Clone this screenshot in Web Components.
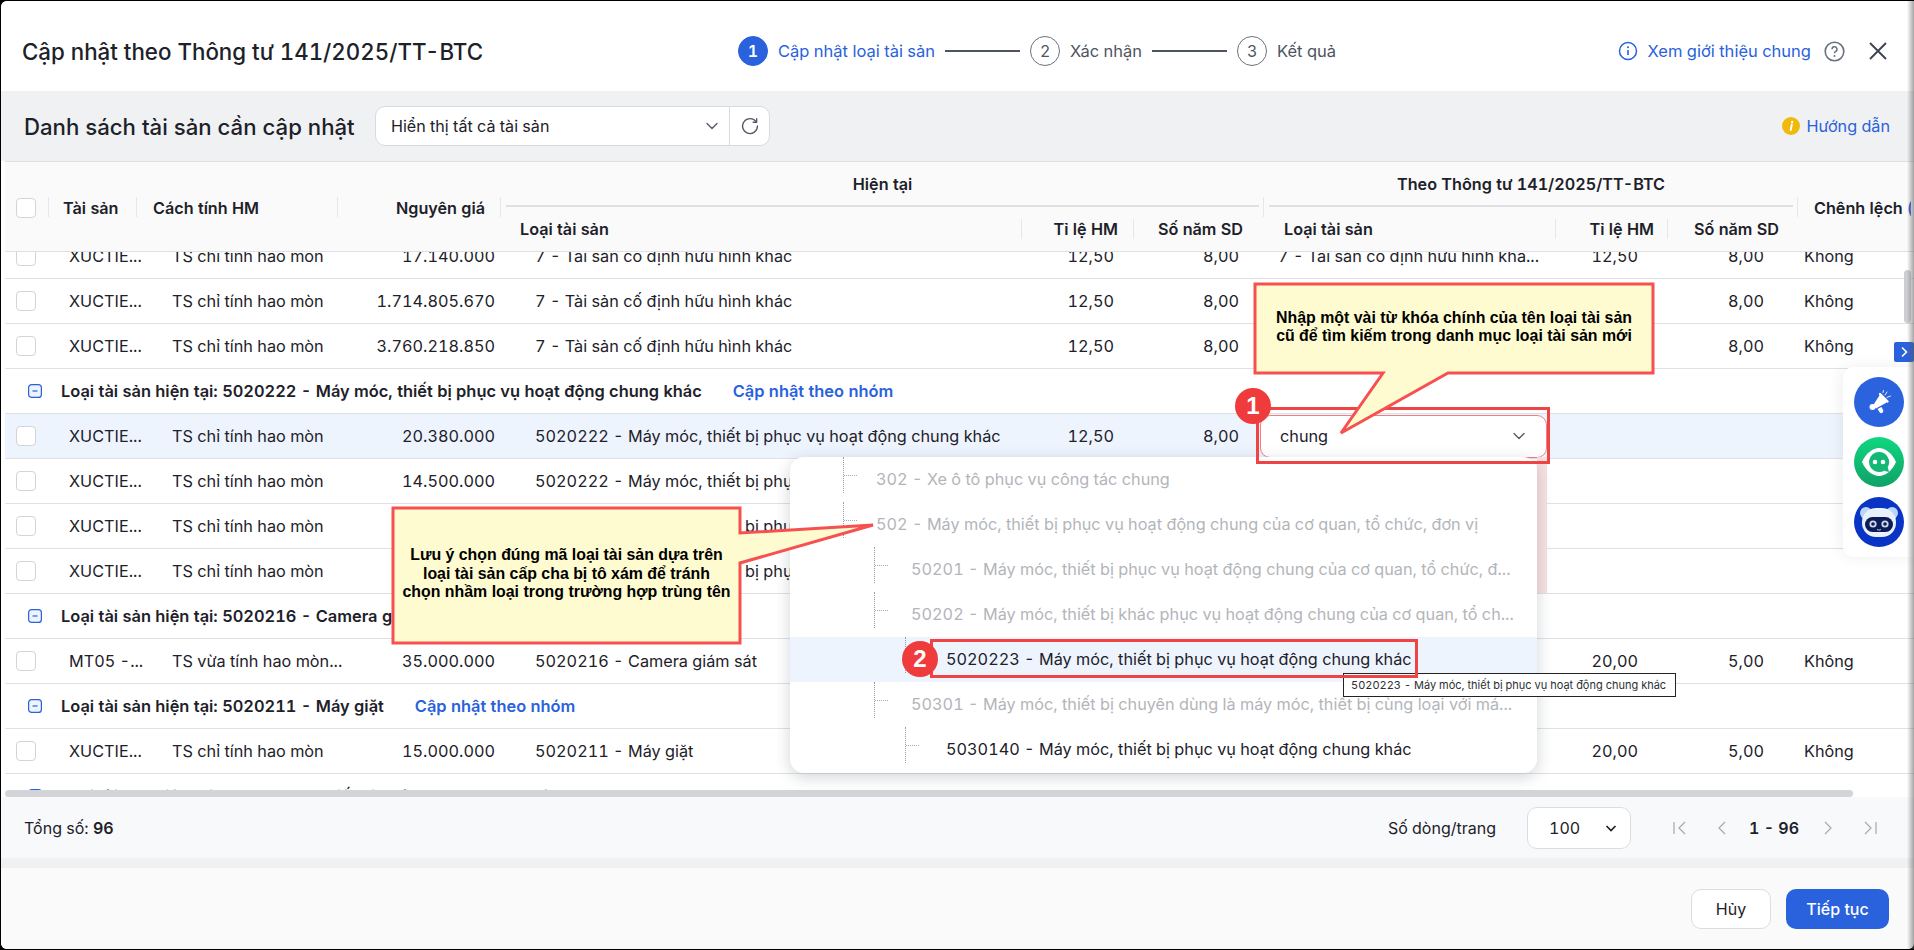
<!DOCTYPE html>
<html lang="vi">
<head>
<meta charset="utf-8">
<title>Cập nhật theo Thông tư 141/2025/TT-BTC</title>
<style>
    html, body { margin: 0; padding: 0; background: #000; overflow: hidden; }
    body { font-family: Inter, "Noto Sans", sans-serif; color: #1d2129; font-variant-numeric: tabular-nums; }
</style>
</head>
<body>
<update-dialog>
    <dialog-header slot="header"></dialog-header>
    <list-toolbar slot="toolbar"></list-toolbar>
    <asset-table slot="table">
        <asset-row cells="XUCTIE...|TS chỉ tính hao mòn|17.140.000|7 - Tài sản cố định hữu hình khác|12,50|8,00|7 - Tài sản cố định hữu hình khá...|12,50|8,00|Không"></asset-row>
        <asset-row cells="XUCTIE...|TS chỉ tính hao mòn|1.714.805.670|7 - Tài sản cố định hữu hình khác|12,50|8,00|7 - Tài sản cố định hữu hình khác|12,50|8,00|Không"></asset-row>
        <asset-row cells="XUCTIE...|TS chỉ tính hao mòn|3.760.218.850|7 - Tài sản cố định hữu hình khác|12,50|8,00|7 - Tài sản cố định hữu hình khác|12,50|8,00|Không"></asset-row>
        <group-row link="Cập nhật theo nhóm">Loại tài sản hiện tại: 5020222 - Máy móc, thiết bị phục vụ hoạt động chung khác</group-row>
        <asset-row active combo="chung" cells="XUCTIE...|TS chỉ tính hao mòn|20.380.000|5020222 - Máy móc, thiết bị phục vụ hoạt động chung khác|12,50|8,00"></asset-row>
        <asset-row cells="XUCTIE...|TS chỉ tính hao mòn|14.500.000|5020222 - Máy móc, thiết bị phục vụ hoạt động chung khác|12,50|8,00"></asset-row>
        <asset-row cells="XUCTIE...|TS chỉ tính hao mòn|25.000.000|5020222 - Máy móc, thiết bị phục vụ hoạt động chung khác|12,50|8,00"></asset-row>
        <asset-row cells="XUCTIE...|TS chỉ tính hao mòn|18.900.000|5020222 - Máy móc, thiết bị phục vụ hoạt động chung khác|12,50|8,00"></asset-row>
        <group-row link="Cập nhật theo nhóm">Loại tài sản hiện tại: 5020216 - Camera giám sát</group-row>
        <asset-row cells="MT05 -...|TS vừa tính hao mòn...|35.000.000|5020216 - Camera giám sát|20,00|5,00|5020216 - Camera giám sát|20,00|5,00|Không"></asset-row>
        <group-row link="Cập nhật theo nhóm">Loại tài sản hiện tại: 5020211 - Máy giặt</group-row>
        <asset-row cells="XUCTIE...|TS chỉ tính hao mòn|15.000.000|5020211 - Máy giặt|20,00|5,00|5020211 - Máy giặt|20,00|5,00|Không"></asset-row>
        <group-row>Loại tài sản hiện tại: 5020213 - Thiết bị khác phục vụ hoạt động chung</group-row>
    </asset-table>
    <table-footer slot="footer"></table-footer>
    <dialog-actions slot="actions"></dialog-actions>

    <tree-dropdown slot="overlay">
        <tree-option level="0" muted>302 - Xe ô tô phục vụ công tác chung</tree-option>
        <tree-option level="0" muted>502 - Máy móc, thiết bị phục vụ hoạt động chung của cơ quan, tổ chức, đơn vị</tree-option>
        <tree-option level="1" muted>50201 - Máy móc, thiết bị phục vụ hoạt động chung của cơ quan, tổ chức, đ...</tree-option>
        <tree-option level="1" muted>50202 - Máy móc, thiết bị khác phục vụ hoạt động chung của cơ quan, tổ ch...</tree-option>
        <tree-option level="2" selected>5020223 - Máy móc, thiết bị phục vụ hoạt động chung khác</tree-option>
        <tree-option level="1" muted>50301 - Máy móc, thiết bị chuyên dùng là máy móc, thiết bị cùng loại với má...</tree-option>
        <tree-option level="2">5030140 - Máy móc, thiết bị phục vụ hoạt động chung khác</tree-option>
    </tree-dropdown>
    <hover-tip slot="overlay">5020223 - Máy móc, thiết bị phục vụ hoạt động chung khác</hover-tip>
    <mark-box slot="overlay" style="left:1255px;top:406px;width:294px;height:57px"></mark-box>
    <mark-box slot="overlay" style="left:929px;top:638px;width:488px;height:39px"></mark-box>
    <step-marker slot="overlay" style="left:1234px;top:387px">1</step-marker>
    <step-marker slot="overlay" style="left:901px;top:640px">2</step-marker>
    <note-callout slot="overlay" style="left:1254px;top:283px;width:398px;height:89px" points="0,0 398,0 398,89 193,89 86,149 128,89 0,89">
        Nhập một vài từ khóa chính của tên loại tài sản<br>cũ để tìm kiếm trong danh mục loại tài sản mới
    </note-callout>
    <note-callout slot="overlay" style="left:392px;top:507px;width:347px;height:135px" points="0,0 347,0 347,25 480,17 347,55 347,135 0,135">
        Lưu ý chọn đúng mã loại tài sản dựa trên<br>loại tài sản cấp cha bị tô xám để tránh<br>chọn nhầm loại trong trường hợp trùng tên
    </note-callout>
    <side-panel slot="overlay"></side-panel>
</update-dialog>

<script>
const ICONS = {
    chevron: `<path d="M4 6.5l5 5 5-5" fill="none" stroke="currentColor" stroke-width="1.4" stroke-linecap="round" stroke-linejoin="round"/>`,
    refresh: `<path d="M14.6 5.4A6.7 6.7 0 1 0 15.7 9" fill="none" stroke="currentColor" stroke-width="1.2" stroke-linecap="round"/><path d="M15 2.4v3.2h-3.2" fill="none" stroke="currentColor" stroke-width="1.2" stroke-linecap="round" stroke-linejoin="round"/>`,
    first: `<path d="M3 3v12M14 3L8 9l6 6" fill="none" stroke="currentColor" stroke-width="1.2"/>`,
    prev: `<path d="M12 3L6 9l6 6" fill="none" stroke="currentColor" stroke-width="1.2"/>`,
    next: `<path d="M6 3l6 6-6 6" fill="none" stroke="currentColor" stroke-width="1.2"/>`,
    last: `<path d="M15 3v12M4 3l6 6-6 6" fill="none" stroke="currentColor" stroke-width="1.2"/>`
};
const icon = (name, size = 18) => `<svg width="${size}" height="${size}" viewBox="0 0 18 18" style="display:block">${ICONS[name]}</svg>`;

class BaseElement extends HTMLElement {
    constructor() {
        super();
        this.attachShadow({ mode: "open" });
    }

    connectedCallback() {
        this.render();
    }

    getTemplate() {
        const template = document.createElement("template");
        template.innerHTML = `<style>${this.getStyles()}</style>${this.getMarkup()}`;
        return template;
    }

    render() {
        this.shadowRoot.appendChild(this.getTemplate().content.cloneNode(true));
    }
}

class UpdateDialog extends BaseElement {
    getStyles() {
        return `
            :host { display: block; position: relative; width: 1913px; height: 948px; margin: 1px 0 1px 1px; }
            .frame { height: 100%; display: flex; flex-direction: column; background: #fafafa; border-radius: 6px 0 6px 6px; overflow: hidden; }
            .edge { position: absolute; top: 0; right: 0; bottom: 0; width: 7px; pointer-events: none; z-index: 5;
                background: linear-gradient(to right, rgba(90,90,90,0), rgba(90,90,90,.55)); }
        `;
    }
    getMarkup() {
        return `
            <div class="frame">
                <slot name="header"></slot>
                <slot name="toolbar"></slot>
                <slot name="table"></slot>
                <slot name="footer"></slot>
                <slot name="actions"></slot>
            </div>
            <slot name="overlay"></slot>
            <div class="edge"></div>
        `;
    }
}

class DialogHeader extends BaseElement {
    getStyles() {
        return `
            :host { display: flex; align-items: center; height: 90px; box-sizing: border-box; padding-top: 10px; background: #fff; flex: none; }
            h1 { margin: 0 0 0 21px; width: 716px; flex: none; font-size: 22.3px; font-weight: 500; white-space: nowrap; color: #1d2129; }
            .steps { display: flex; align-items: center; font-size: 16.5px; color: #4e5561; }
            .num { width: 28px; height: 28px; border: 1px solid #6b717c; border-radius: 50%; display: flex; align-items: center; justify-content: center; margin-right: 10px; font-size: 16px; }
            .current .num { background: #2962dc; border-color: #2962dc; color: #fff; font-weight: 600; }
            .current { color: #2962dc; }
            .step { display: flex; align-items: center; }
            .bar { width: 75px; height: 2px; background: #4e5561; margin: 0 10px; }
            .right { margin-left: auto; display: flex; align-items: center; padding-right: 26px; }
            .intro { color: #2962dc; font-size: 16.5px; margin: 0 13px 0 10px; }
            .x { margin-left: 23px; display: block; }
        `;
    }
    getMarkup() {
        return `
            <h1>Cập nhật theo Thông tư 141/2025/TT-BTC</h1>
            <div class="steps">
                <div class="step current"><span class="num">1</span>Cập nhật loại tài sản</div>
                <span class="bar"></span>
                <div class="step"><span class="num">2</span>Xác nhận</div>
                <span class="bar"></span>
                <div class="step"><span class="num">3</span>Kết quả</div>
            </div>
            <div class="right">
                <svg width="20" height="20" viewBox="0 0 20 20"><circle cx="10" cy="10" r="8.5" fill="none" stroke="#2962dc" stroke-width="1.5"/><path d="M10 9v5" stroke="#2962dc" stroke-width="1.6"/><circle cx="10" cy="6.2" r="1" fill="#2962dc"/></svg>
                <span class="intro">Xem giới thiệu chung</span>
                <svg width="21" height="21" viewBox="0 0 21 21"><circle cx="10.5" cy="10.5" r="9.3" fill="none" stroke="#6b717c" stroke-width="1.6"/><path d="M8 8.2a2.5 2.5 0 1 1 3.7 2.2c-.8.4-1.2.9-1.2 1.8" fill="none" stroke="#6b717c" stroke-width="1.5"/><circle cx="10.5" cy="15" r="1" fill="#6b717c"/></svg>
                <svg class="x" width="20" height="20" viewBox="0 0 20 20"><path d="M2 2l16 16M18 2L2 18" stroke="#3d4450" stroke-width="1.9"/></svg>
            </div>
        `;
    }
}

class ListToolbar extends BaseElement {
    getStyles() {
        return `
            :host { display: flex; align-items: center; height: 70px; background: #f0f1f3; padding-left: 23px; flex: none; }
            h2 { margin: 0; font-size: 22.2px; font-weight: 500; width: 351px; flex: none; white-space: nowrap; }
            .picker { display: flex; width: 393px; height: 38px; border: 1px solid #d9dade; border-radius: 10px; background: #fff; align-items: center; font-size: 16.1px; }
            .value { flex: 1; padding-left: 15px; white-space: nowrap; }
            .arrow { color: #555b66; margin-right: 8px; }
            .reload { width: 39px; height: 100%; border-left: 1px solid #d9dade; display: flex; align-items: center; justify-content: center; color: #555b66; }
            .guide { margin-left: auto; margin-right: 24px; display: flex; align-items: center; color: #2962dc; font-size: 16.2px; gap: 6px; }
        `;
    }
    getMarkup() {
        return `
            <h2>Danh sách tài sản cần cập nhật</h2>
            <div class="picker">
                <span class="value">Hiển thị tất cả tài sản</span>
                <span class="arrow">${icon("chevron")}</span>
                <span class="reload">${icon("refresh", 20)}</span>
            </div>
            <div class="guide">
                <svg width="18" height="18" viewBox="0 0 18 18"><circle cx="9" cy="9" r="9" fill="#f0b90b"/><path d="M9.8 7.6L8.7 13" stroke="#fff" stroke-width="2" stroke-linecap="round"/><circle cx="10.2" cy="4.9" r="1.2" fill="#fff"/></svg>
                Hướng dẫn
            </div>
        `;
    }
}

const COLUMNS = "44px 88px 201px 163px 521px 112px 130px 292px 112px 130px 113px";

class AssetTable extends BaseElement {
    getStyles() {
        return `
            :host { display: block; position: relative; flex: none; height: 636px; background: #fff; padding-left: 4px; }
            .head { display: grid; grid-template-columns: ${COLUMNS}; grid-template-rows: 45px 44px; height: 91px; box-sizing: border-box;
                border-top: 1px solid #dfe0e3; border-bottom: 1px solid #dfe0e3; background: #fafafa; font-size: 16.2px; font-weight: 600; }
            .head > div { display: flex; align-items: center; white-space: nowrap; box-sizing: border-box; }
            .span { grid-row: 1 / span 2; padding-top: 2px; }
            .sep { background: linear-gradient(#e6e7ea, #e6e7ea) right center / 1px 20px no-repeat; }
            .group { justify-content: center; margin: 0 5px; border-bottom: 2px solid #dfe0e3; }
            .end { justify-content: flex-end; }
            .body { height: 538px; overflow: hidden; }
            .rows { margin-top: -18px; }
            .hbar { height: 7px; width: 1848px; border-radius: 4px; background: #d3d4d8; }
            .vbar { position: absolute; right: 3px; top: 109px; width: 7px; height: 53px; border-radius: 4px; background: #ccced2; }
        `;
    }
    getMarkup() {
        return `
            <div class="head">
                <div class="span sep" style="grid-column:1;padding-left:11px"><span style="width:18px;height:18px;border:1px solid #d3d4d8;border-radius:4px;background:#fff"></span></div>
                <div class="span sep" style="grid-column:2;padding-left:14px">Tài sản</div>
                <div class="span sep" style="grid-column:3;padding-left:16px">Cách tính HM</div>
                <div class="span sep end" style="grid-column:4;padding-right:16px">Nguyên giá</div>
                <div class="group" style="grid-column:5 / span 3;grid-row:1">Hiện tại</div>
                <div class="group" style="grid-column:8 / span 3;grid-row:1">Theo Thông tư 141/2025/TT-BTC</div>
                <div class="sep" style="grid-column:7;grid-row:1 / span 2"></div>
                <div class="sep" style="grid-column:10;grid-row:1 / span 2"></div>
                <div class="span" style="grid-column:11;grid-row:1 / span 2;padding-left:16px;overflow:hidden">Chênh lệch&nbsp;<span style="color:#2962dc">(i)</span></div>
                <div class="sep" style="grid-column:5;grid-row:2;padding-left:19px">Loại tài sản</div>
                <div class="sep end" style="grid-column:6;grid-row:2;padding-right:16px">Tỉ lệ HM</div>
                <div class="end" style="grid-column:7;grid-row:2;padding-right:21px">Số năm SD</div>
                <div class="sep" style="grid-column:8;grid-row:2;padding-left:20px">Loại tài sản</div>
                <div class="sep end" style="grid-column:9;grid-row:2;padding-right:14px">Tỉ lệ HM</div>
                <div class="end" style="grid-column:10;grid-row:2;padding-right:19px">Số năm SD</div>
            </div>
            <div class="body"><div class="rows"><slot></slot></div></div>
            <div class="hbar"></div>
            <div class="vbar"></div>
        `;
    }
}

class AssetRow extends BaseElement {
    getStyles() {
        return `
            :host { display: grid; grid-template-columns: ${COLUMNS}; height: 45px; box-sizing: border-box; border-bottom: 1px solid #e0e1e4; font-size: 16.25px; align-items: center; white-space: nowrap; }
            :host([active]) { background: #eef4fd; }
            .box { width: 18px; height: 18px; border: 1px solid #d3d4d8; border-radius: 4px; background: #fff; margin-left: 11px; }
            .cell { box-sizing: border-box; }
            .end { text-align: right; }
            .c0 { padding-left: 20px; } .c1 { padding-left: 35px; } .c2 { padding-right: 6px; }
            .c3 { padding-left: 34px; } .c4 { padding-right: 20px; } .c5 { padding-right: 25px; }
            .c6 { padding-left: 14px; } .c7 { padding-right: 30px; } .c8 { padding-right: 34px; } .c9 { padding-left: 6px; }
            .combo { grid-column: 8; margin-left: -4px; width: 287px; height: 43px; box-sizing: border-box; border: 1px solid #f27f7f; border-radius: 10px; background: #fff;
                display: flex; align-items: center; justify-content: space-between; padding: 0 18px 0 19px; }
            .combo svg { color: #555b66; }
        `;
    }
    getMarkup() {
        const cells = this.getAttribute("cells").split("|");
        const ends = [2, 4, 5, 7, 8];
        const html = cells.map((text, i) => `<div class="cell c${i} ${ends.includes(i) ? "end" : ""}">${text}</div>`).join("");
        const combo = this.hasAttribute("combo")
            ? `<div class="combo"><span>${this.getAttribute("combo")}</span>${icon("chevron")}</div>`
            : "";
        return `<div class="box"></div>${html}${combo}`;
    }
}

class GroupRow extends BaseElement {
    getStyles() {
        return `
            :host { display: flex; align-items: center; height: 45px; box-sizing: border-box; border-bottom: 1px solid #e0e1e4; padding-left: 23px; font-size: 16.4px; font-weight: 600; white-space: nowrap; }
            svg { margin-right: 19px; flex: none; }
            a { color: #2962dc; margin-left: 31px; }
        `;
    }
    getMarkup() {
        const link = this.getAttribute("link");
        return `
            <svg width="14" height="14" viewBox="0 0 14 14"><rect x=".6" y=".6" width="12.8" height="12.8" rx="3" fill="#eef3fe" stroke="#2962dc" stroke-width="1.2"/><path d="M4.5 7h5" stroke="#2962dc" stroke-width="1.2"/></svg>
            <slot></slot>
            ${link ? `<a>${link}</a>` : ""}
        `;
    }
}

class TableFooter extends BaseElement {
    getStyles() {
        return `
            :host { display: flex; align-items: center; height: 61px; background: #f8f9fb; padding-left: 23px; font-size: 16px; flex: none; }
            .pages { margin-left: auto; display: flex; align-items: center; padding-right: 35px; }
            .size { height: 40px; border: 1px solid #dcdde0; border-radius: 10px; background: #fff; margin: 0 0 0 31px; display: flex; align-items: center; justify-content: space-between; padding: 0 12px 0 21px; box-sizing: content-box; width: 69px; }
            .nav { display: flex; align-items: center; color: #a5a8ae; }
            .count { font-weight: 600; margin: 0 20px 0 18px; }
            b { font-weight: 600; }
        `;
    }
    getMarkup() {
        return `
            <span>Tổng số: <b>96</b></span>
            <div class="pages">
                <span>Số dòng/trang</span>
                <div class="size"><span>100</span><svg width="14" height="14" viewBox="0 0 14 14"><path d="M2.5 5l4.5 4.5L11.500 5" fill="none" stroke="#1d2129" stroke-width="1.7"/></svg></div>
                <div class="nav" style="margin-left:40px">
                    ${icon("first")}<span style="width:24px"></span>${icon("prev")}
                    <span class="count" style="color:#1d2129">1 - 96</span>
                    ${icon("next")}<span style="width:24px"></span>${icon("last")}
                </div>
            </div>
        `;
    }
}

class DialogActions extends BaseElement {
    getStyles() {
        return `
            :host { display: flex; justify-content: flex-end; align-items: flex-start; gap: 15px; flex: 1; background: #fafafa; border-top: 10px solid #f0f1f3; padding: 21px 25px 0 0; font-size: 16px; }
            span { height: 40px; border-radius: 10px; display: flex; align-items: center; justify-content: center; box-sizing: border-box; }
            .cancel { width: 80px; background: #fff; border: 1px solid #dcdde0; }
            .next { width: 103px; background: #2962dc; color: #fff; font-weight: 500; }
        `;
    }
    getMarkup() {
        return `<span class="cancel">Hủy</span><span class="next">Tiếp tục</span>`;
    }
}

class TreeDropdown extends BaseElement {
    getStyles() {
        return `
            :host { position: absolute; left: 789px; top: 456px; width: 747px; height: 316px; z-index: 1; }
            .stripe { position: absolute; left: 747px; top: 0; width: 10px; height: 136px; background: #f7e0e1; }
            .list { position: relative; height: 100%; background: #fff; border-radius: 14px; overflow: hidden; box-shadow: 0 4px 16px rgba(30,40,60,.2); }
        `;
    }
    getMarkup() {
        return `<div class="stripe"></div><div class="list"><slot></slot></div>`;
    }
}

class TreeOption extends BaseElement {
    getStyles() {
        return `
            :host { display: flex; align-items: flex-start; height: 45px; font-size: 16.25px; white-space: nowrap; color: #1d2129; --pad: 53px; --gap: 19px; padding-left: var(--pad); box-sizing: border-box; }
            :host([level="1"]) { --pad: 84px; --gap: 23px; }
            :host([level="2"]) { --pad: 115px; --gap: 27px; }
            :host([muted]) { color: #b3b5ba; }
            :host([selected]) { background: #edf4fd; }
            .guide { width: 13px; height: 36px; flex: none; border-left: 1px dotted #9a9ca2; box-sizing: content-box;
                background: linear-gradient(to right, #a8aab0 50%, transparent 50%) 0 18px / 2px 1px repeat-x; }
            .label { margin-left: var(--gap); line-height: 45px; }
        `;
    }
    getMarkup() {
        return `<span class="guide"></span><span class="label"><slot></slot></span>`;
    }
}

class HoverTip extends BaseElement {
    getStyles() {
        return `
            :host { position: absolute; left: 1342px; top: 672px; height: 24px; width: 333px; box-sizing: border-box; border: 1px solid #222; background: #fff; font-size: 11px; line-height: 22px; padding-left: 7px; white-space: nowrap; color: #2b2f36; z-index: 2; }
        `;
    }
    getMarkup() {
        return `<slot></slot>`;
    }
}

class MarkBox extends BaseElement {
    getStyles() {
        return `:host { position: absolute; box-sizing: border-box; border: 3px solid #f04444; z-index: 3; pointer-events: none; }`;
    }
    getMarkup() {
        return ``;
    }
}

class StepMarker extends BaseElement {
    getStyles() {
        return `
            :host { position: absolute; width: 36px; height: 36px; border-radius: 50%; background: #ef3b3b; color: #fff; z-index: 3;
                display: flex; align-items: center; justify-content: center; font: bold 24px "Liberation Sans", sans-serif; }
        `;
    }
    getMarkup() {
        return `<slot></slot>`;
    }
}

class NoteCallout extends BaseElement {
    getStyles() {
        return `
            :host { position: absolute; z-index: 4; display: flex; align-items: center; justify-content: center; text-align: center;
                font: bold 15.9px/18.4px "Liberation Sans", sans-serif; color: #000; white-space: nowrap; box-sizing: border-box; padding-bottom: 3px; }
            svg { position: absolute; left: 0; top: 0; overflow: visible; }
            .text { position: relative; }
        `;
    }
    getMarkup() {
        return `
            <svg width="1" height="1"><polygon points="${this.getAttribute("points")}" fill="#fffbd0" stroke="#f75050" stroke-width="3"/></svg>
            <div class="text"><slot></slot></div>
        `;
    }
}

class SidePanel extends BaseElement {
    getStyles() {
        return `
            :host { position: absolute; left: 1842px; top: 341px; width: 71px; z-index: 4; display: block; }
            .tab { width: 20px; height: 20px; margin: 0 0 5px 51px; background: #2962dc; border-radius: 2px; display: flex; align-items: center; justify-content: center; }
            .panel { height: 190px; background: #fff; border-radius: 10px 0 0 10px; box-shadow: -2px 0 14px rgba(40,50,70,.08); display: flex; flex-direction: column; align-items: center; gap: 10px; padding: 10px 0 0 0; box-sizing: border-box; }
            svg { display: block; }
        `;
    }
    getMarkup() {
        return `
            <div class="tab"><svg width="12" height="12" viewBox="0 0 12 12"><path d="M4 1.500L8.500 6 4 10.500" fill="none" stroke="#fff" stroke-width="1.6"/></svg></div>
            <div class="panel">
                <svg width="50" height="50" viewBox="0 0 50 50">
                    <circle cx="25" cy="25" r="25" fill="#2b62dd"/>
                    <path d="M26 17.500L33.500 25 22 31.500 19 28.500z" fill="#fff"/>
                    <path d="M26 17l7.500 7.500" stroke="#fff" stroke-width="2.400" stroke-linecap="round"/>
                    <circle cx="18.500" cy="30" r="3" fill="#fff"/>
                    <path d="M23.500 32l4-2 1.800 3.500a2.100 2.100 0 0 1-3.500 2z" fill="#fff"/>
                    <path d="M31 18l2-3M33 20.500l3.500-1.500M29 15.500l.5-2" stroke="#fff" stroke-width=".9" stroke-linecap="round"/>
                </svg>
                <svg width="50" height="50" viewBox="0 0 50 50">
                    <defs><linearGradient id="g" x1="0" y1="0" x2="0" y2="1"><stop offset="0" stop-color="#0fd77f"/><stop offset="1" stop-color="#10a168"/></linearGradient></defs>
                    <circle cx="25" cy="25" r="25" fill="url(#g)"/>
                    <path d="M8 25c4-9 11-14 17-14s13 5 17 14c-4 9-11 14-17 14S12 34 8 25z" fill="#fff"/>
                    <path d="M25 15a10 10 0 1 0 5 18.700l5 1.300-1.300-5A10 10 0 0 0 25 15z" fill="#12b873"/>
                    <circle cx="21" cy="25" r="2.300" fill="#fff"/><circle cx="29" cy="25" r="2.300" fill="#fff"/>
                </svg>
                <svg width="50" height="50" viewBox="0 0 50 50">
                    <circle cx="25" cy="25" r="25" fill="#0a35c4"/>
                    <circle cx="12" cy="16" r="6" fill="#b9d6f8"/><circle cx="38" cy="16" r="6" fill="#b9d6f8"/>
                    <rect x="8" y="11" width="34" height="29" rx="14" fill="#e9f1fb"/>
                    <rect x="11" y="20" width="28" height="15" rx="7.500" fill="#0c1c58"/>
                    <circle cx="19" cy="27" r="3.600" fill="#cfd8ea"/><circle cx="31" cy="27" r="3.600" fill="#cfd8ea"/>
                    <circle cx="19" cy="27" r="1.800" fill="#0c1c58"/><circle cx="31" cy="27" r="1.800" fill="#0c1c58"/>
                    <path d="M23 32.500q2 1.300 4 0" fill="none" stroke="#cfd8ea" stroke-width=".9"/>
                </svg>
            </div>
        `;
    }
}

customElements.define("update-dialog", UpdateDialog);
customElements.define("dialog-header", DialogHeader);
customElements.define("list-toolbar", ListToolbar);
customElements.define("asset-table", AssetTable);
customElements.define("asset-row", AssetRow);
customElements.define("group-row", GroupRow);
customElements.define("table-footer", TableFooter);
customElements.define("dialog-actions", DialogActions);
customElements.define("tree-dropdown", TreeDropdown);
customElements.define("tree-option", TreeOption);
customElements.define("hover-tip", HoverTip);
customElements.define("mark-box", MarkBox);
customElements.define("step-marker", StepMarker);
customElements.define("note-callout", NoteCallout);
customElements.define("side-panel", SidePanel);
</script>
</body>
</html>
